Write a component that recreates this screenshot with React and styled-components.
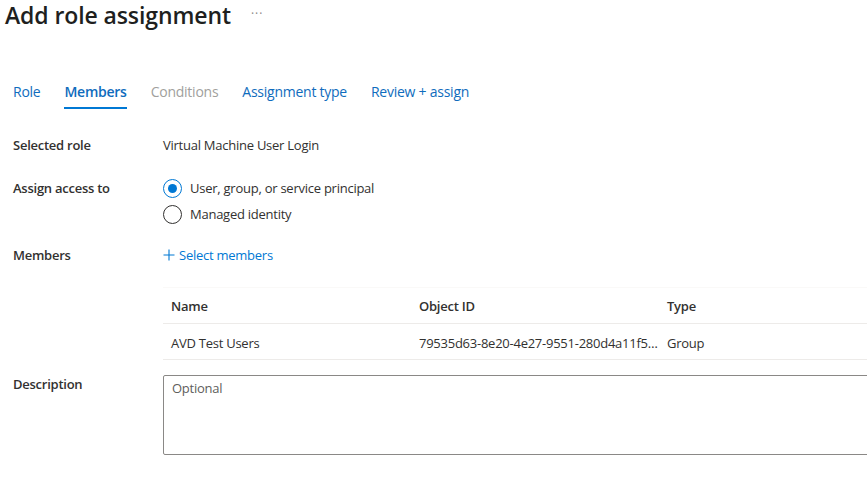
import React from 'react';
import styled, { createGlobalStyle } from 'styled-components';

const GlobalStyle = createGlobalStyle`
	body {
		margin: 0;
		background: #ffffff;
		font-family: 'Open Sans', 'Noto Sans', sans-serif;
		color: #323130;
		overflow: hidden;
	}
`;

const Page = styled.div`
	width: 867px;
	height: 478px;
	overflow: hidden;
`;

const TitleBar = styled.div`
	display: flex;
	align-items: center;
	height: 30px;
	padding-left: 5px;
`;

const Title = styled.h1`
	margin: 0;
	font-size: 23px;
	line-height: 29px;
	font-weight: 600;
	color: #201f1e;
	letter-spacing: -0.1px;
`;

const More = styled.span`
	margin-left: 20px;
	margin-top: -4px;
	font-size: 12px;
	color: #8a8886;
	letter-spacing: 1px;
`;

const Tabs = styled.div`
	display: flex;
	gap: 24px;
	margin-top: 52px;
	padding-left: 13px;
`;

const Tab = styled.div`
	font-size: 14px;
	line-height: 20px;
	letter-spacing: -0.25px;
	padding-bottom: 5px;
	border-bottom: 2px solid ${({ $active }) => ($active ? '#0078d4' : 'transparent')};
	font-weight: ${({ $active }) => ($active ? 600 : 400)};
	color: ${({ $disabled }) => ($disabled ? '#a19f9d' : '#0f6cbd')};
`;

const Row = styled.div`
	display: grid;
	grid-template-columns: 150px 1fr;
	padding-left: 13px;
	margin-top: ${({ $top }) => $top}px;
	font-size: 13px;
	line-height: 20px;
	letter-spacing: -0.25px;
`;

const Label = styled.div`
	font-weight: 600;
	color: #323130;
	line-height: ${({ $lh }) => $lh || 20}px;
	margin-top: ${({ $offset }) => $offset || 0}px;
`;

const Value = styled.div`
	color: #323130;
`;

const RadioGroup = styled.div`
	display: flex;
	flex-direction: column;
`;

const RadioItem = styled.label`
	display: flex;
	align-items: center;
	gap: 8px;
	height: 26px;
`;

const RadioCircle = styled.span`
	box-sizing: border-box;
	width: 19px;
	height: 19px;
	border-radius: 50%;
	border: 1px solid ${({ $checked }) => ($checked ? '#0078d4' : '#323130')};
	display: flex;
	align-items: center;
	justify-content: center;
	&::after {
		content: '';
		width: 9px;
		height: 9px;
		border-radius: 50%;
		background: ${({ $checked }) => ($checked ? '#0078d4' : 'transparent')};
	}
`;

const AddLink = styled.div`
	display: flex;
	align-items: center;
	gap: 4px;
	color: #0078d4;
`;

const Table = styled.div`
	margin-top: 22px;
	margin-left: 163px;
	width: 720px;
	font-size: 13px;
	letter-spacing: -0.25px;
`;

const TableRow = styled.div`
	display: grid;
	grid-template-columns: 248px 248px 1fr;
	box-sizing: border-box;
	height: ${({ $h }) => $h}px;
	padding-top: ${({ $pad }) => $pad || 0}px;
	align-items: center;
	border-bottom: 1px solid #edebe9;
	border-top: ${({ $head }) => ($head ? '1px solid #faf9f8' : 'none')};
	font-weight: ${({ $head }) => ($head ? 600 : 400)};
	color: #323130;
`;

const Cell = styled.div`
	padding-left: 8px;
	white-space: nowrap;
	overflow: hidden;
	text-overflow: ellipsis;
`;

const TextArea = styled.div`
	box-sizing: border-box;
	width: 720px;
	height: 80px;
	border: 1px solid #8a8886;
	border-radius: 2px;
	padding: 3px 8px;
	color: #605e5c;
	font-size: 13px;
	line-height: 18px;
`;

const PlusIcon = () => (
	<svg width="12" height="12" viewBox="0 0 12 12">
		<path d="M6 0.5v11M0.5 6h11" stroke="#0078d4" strokeWidth="1.1" fill="none" />
	</svg>
);

export default function App() {
	return (
		<Page>
			<GlobalStyle />
			<TitleBar>
				<Title>Add role assignment</Title>
				<More>···</More>
			</TitleBar>

			<Tabs>
				<Tab>Role</Tab>
				<Tab $active>Members</Tab>
				<Tab $disabled>Conditions</Tab>
				<Tab>Assignment type</Tab>
				<Tab>Review + assign</Tab>
			</Tabs>

			<Row $top={26}>
				<Label>Selected role</Label>
				<Value>Virtual Machine User Login</Value>
			</Row>

			<Row $top={20}>
				<Label $lh={26}>Assign access to</Label>
				<RadioGroup>
					<RadioItem>
						<RadioCircle $checked />
						User, group, or service principal
					</RadioItem>
					<RadioItem>
						<RadioCircle />
						Managed identity
					</RadioItem>
				</RadioGroup>
			</Row>

			<Row $top={18}>
				<Label>Members</Label>
				<AddLink>
					<PlusIcon />
					Select members
				</AddLink>
			</Row>

			<Table>
				<TableRow $head $h={37}>
					<Cell>Name</Cell>
					<Cell>Object ID</Cell>
					<Cell>Type</Cell>
				</TableRow>
				<TableRow $h={36} $pad={2}>
					<Cell>AVD Test Users</Cell>
					<Cell>79535d63-8e20-4e27-9551-280d4a11f5d2</Cell>
					<Cell>Group</Cell>
				</TableRow>
			</Table>

			<Row $top={15}>
				<Label $offset={-1}>Description</Label>
				<TextArea>Optional</TextArea>
			</Row>
		</Page>
	);
}
